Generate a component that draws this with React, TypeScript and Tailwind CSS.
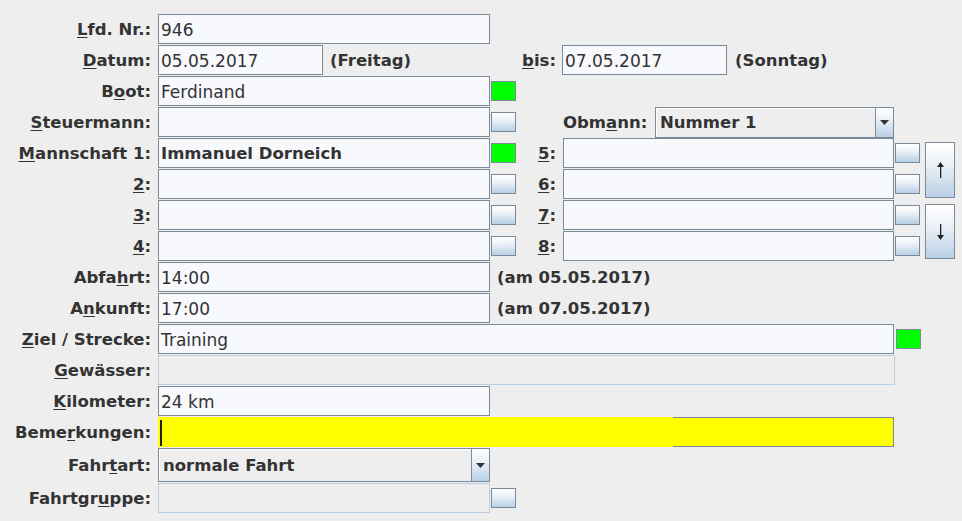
import type { ReactNode } from 'react';

// Ocean-style widgets for the trip entry form
const fieldBase = 'h-[30px] shrink-0 border border-[#7a8a99] bg-[#f7f9fc] pl-[2px] flex items-center';
const buttonFace =
  'bg-[linear-gradient(to_bottom,#ffffff_0%,#eef3f8_35%,#dbe6f1_60%,#b8cfe5_100%)]';

function Mnemonic({ text, at }: { text: string; at: number }) {
  return (
    <>
      {text.slice(0, at)}
      <span className="underline decoration-1 underline-offset-[2px]">{text.charAt(at)}</span>
      {text.slice(at + 1)}
    </>
  );
}

function Label({ children }: { children: ReactNode }) {
  return (
    <div className="w-[151px] shrink-0 pt-[2px] text-right font-bold whitespace-nowrap">{children}</div>
  );
}

function Field({
  width,
  value,
  bold,
}: {
  width: string;
  value?: string;
  bold?: boolean;
}) {
  return (
    <div className={`${fieldBase} ${width} ${bold ? 'font-bold' : 'text-[17px]'}`}>
      <span className="pt-[2px] whitespace-nowrap">{value}</span>
    </div>
  );
}

function DisabledField({ width }: { width: string }) {
  return <div className={`h-[30px] shrink-0 border border-[#b8cfe5] bg-[#eeeeee] ${width}`} />;
}

function SmallButton() {
  return <div className={`h-[20px] w-[25px] shrink-0 border border-[#7a8a99] ${buttonFace}`} />;
}

function GreenBox() {
  return <div className="h-[20px] w-[25px] shrink-0 border border-[#7a8a99] bg-[#00ff00]" />;
}

function ComboBox({ width, value }: { width: string; value: string }) {
  return (
    <div className={`flex shrink-0 border border-[#7a8a99] bg-[#eeeeee] ${width}`}>
      <div className="flex flex-1 items-center border-t border-l border-white pl-[3px] font-bold">
        <span className="pt-[2px] whitespace-nowrap">{value}</span>
      </div>
      <div className={`flex w-[18px] items-center justify-center border-l border-[#7a8a99] ${buttonFace}`}>
        <svg width="9" height="5" viewBox="0 0 9 5">
          <path d="M0 0H9L4.5 5Z" fill="#333333" />
        </svg>
      </div>
    </div>
  );
}

function ArrowButton({ dir, className }: { dir: 'up' | 'down'; className: string }) {
  return (
    <div
      className={`flex w-[30px] items-center justify-center border border-[#7a8a99] ${buttonFace} ${className}`}
    >
      <svg width="9" height="16" viewBox="0 0 9 16">
        {dir === 'up' ? (
          <>
            <path d="M4.5 0L8 5H1Z" fill="#222222" />
            <rect x="4" y="4" width="1.3" height="12" fill="#222222" />
          </>
        ) : (
          <>
            <path d="M4.5 16L8 11H1Z" fill="#222222" />
            <rect x="4" y="0" width="1.3" height="12" fill="#222222" />
          </>
        )}
      </svg>
    </div>
  );
}

function Row({ children, className = 'h-[30px]' }: { children: ReactNode; className?: string }) {
  return <div className={`flex items-center ${className}`}>{children}</div>;
}

const crewLeft = [
  { label: <Mnemonic text="Mannschaft 1:" at={0} />, value: 'Immanuel Dorneich', green: true },
  { label: <Mnemonic text="2:" at={0} />, value: '' },
  { label: <Mnemonic text="3:" at={0} />, value: '' },
  { label: <Mnemonic text="4:" at={0} />, value: '' },
];

const crewRight = ['5:', '6:', '7:', '8:'];

export default function App() {
  return (
    <div className="h-[521px] w-[962px] overflow-hidden bg-[#eeeeee] font-['DejaVu_Sans','Liberation_Sans',sans-serif] text-[16.5px] leading-none text-[#333333]">
      <div className="flex flex-col gap-[1px] pt-[14px]">
        <Row>
          <Label>
            <Mnemonic text="Lfd. Nr.:" at={0} />
          </Label>
          <div className="ml-[7px]">
            <Field width="w-[332px]" value="946" />
          </div>
        </Row>

        <Row>
          <Label>
            <Mnemonic text="Datum:" at={0} />
          </Label>
          <div className="ml-[7px]">
            <Field width="w-[165px]" value="05.05.2017" />
          </div>
          <div className="flex w-[239px] shrink-0 items-center justify-between pt-[2px] pr-[6px] pl-[7px] font-bold">
            <span>(Freitag)</span>
            <span>
              <Mnemonic text="bis:" at={0} />
            </span>
          </div>
          <Field width="w-[165px]" value="07.05.2017" />
          <span className="ml-[8px] pt-[2px] font-bold">(Sonntag)</span>
        </Row>

        <Row>
          <Label>
            <Mnemonic text="Boot:" at={1} />
          </Label>
          <div className="ml-[7px]">
            <Field width="w-[332px]" value="Ferdinand" />
          </div>
          <div className="ml-[1px]">
            <GreenBox />
          </div>
        </Row>

        <Row>
          <Label>
            <Mnemonic text="Steuermann:" at={0} />
          </Label>
          <div className="ml-[7px]">
            <Field width="w-[332px]" />
          </div>
          <div className="ml-[1px]">
            <SmallButton />
          </div>
          <div className="ml-[47px] w-[92px] shrink-0 pt-[2px] font-bold">
            <Mnemonic text="Obmann:" at={3} />
          </div>
          <ComboBox width="w-[239px] h-[31px]" value="Nummer 1" />
        </Row>

        <div className="flex">
          <div className="flex flex-col gap-[1px]">
            {crewLeft.map((c, i) => (
              <Row key={i}>
                <Label>{c.label}</Label>
                <div className="ml-[7px]">
                  <Field width="w-[332px]" value={c.value} bold />
                </div>
                <div className="ml-[1px]">{c.green ? <GreenBox /> : <SmallButton />}</div>
              </Row>
            ))}
          </div>
          <div className="flex flex-col gap-[1px]">
            {crewRight.map((n) => (
              <Row key={n}>
                <div className="w-[40px] shrink-0 pt-[2px] text-right font-bold">
                  <Mnemonic text={n} at={0} />
                </div>
                <div className="ml-[7px]">
                  <Field width="w-[331px]" />
                </div>
                <div className="ml-[1px]">
                  <SmallButton />
                </div>
              </Row>
            ))}
          </div>
          <div className="ml-[5px] flex flex-col">
            <ArrowButton dir="up" className="mt-[4px] h-[56px]" />
            <ArrowButton dir="down" className="mt-[6px] h-[55px]" />
          </div>
        </div>

        <Row>
          <Label>
            <Mnemonic text="Abfahrt:" at={4} />
          </Label>
          <div className="ml-[7px]">
            <Field width="w-[332px]" value="14:00" />
          </div>
          <span className="ml-[7px] pt-[2px] font-bold">(am 05.05.2017)</span>
        </Row>

        <Row>
          <Label>
            <Mnemonic text="Ankunft:" at={1} />
          </Label>
          <div className="ml-[7px]">
            <Field width="w-[332px]" value="17:00" />
          </div>
          <span className="ml-[7px] pt-[2px] font-bold">(am 07.05.2017)</span>
        </Row>

        <Row>
          <Label>
            <Mnemonic text="Ziel / Strecke:" at={0} />
          </Label>
          <div className="ml-[7px]">
            <Field width="w-[736px]" value="Training" />
          </div>
          <div className="ml-[2px]">
            <GreenBox />
          </div>
        </Row>

        <Row>
          <Label>
            <Mnemonic text="Gewässer:" at={0} />
          </Label>
          <div className="ml-[7px]">
            <DisabledField width="w-[737px]" />
          </div>
        </Row>

        <Row>
          <Label>
            <Mnemonic text="Kilometer:" at={0} />
          </Label>
          <div className="ml-[7px]">
            <Field width="w-[332px]" value="24 km" />
          </div>
        </Row>

        <Row>
          <Label>
            <Mnemonic text="Bemerkungen:" at={4} />
          </Label>
          <div className="relative ml-[7px] h-[30px] w-[736px] shrink-0 border border-[#7a8a99] bg-[#ffff00]">
            {/* highlight painted over the border on the left part */}
            <div className="absolute -top-px -bottom-px -left-px w-[515px] bg-[#ffff00]" />
            <div className="absolute top-[2px] left-[1px] h-[26px] w-[2px] bg-[#222222]" />
          </div>
        </Row>

        <Row className="h-[34px]">
          <Label>
            <Mnemonic text="Fahrtart:" at={4} />
          </Label>
          <div className="ml-[7px]">
            <ComboBox width="w-[332px] h-[34px]" value="normale Fahrt" />
          </div>
        </Row>

        <Row>
          <Label>
            <Mnemonic text="Fahrtgruppe:" at={7} />
          </Label>
          <div className="ml-[7px]">
            <DisabledField width="w-[332px]" />
          </div>
          <div className="ml-[1px]">
            <SmallButton />
          </div>
        </Row>
      </div>
    </div>
  );
}
